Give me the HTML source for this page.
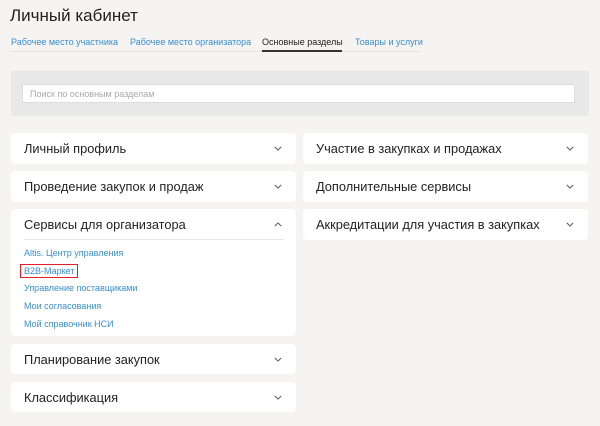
<!DOCTYPE html>
<html><head><meta charset="utf-8"><style>
*{box-sizing:border-box;margin:0;padding:0}
body{width:600px;height:426px;background:#f5f4f2;font-family:"Liberation Sans",sans-serif;position:relative;overflow:hidden;color:#222}
.a{position:absolute}
h1{position:absolute;left:10px;top:6px;font-size:17px;font-weight:normal;color:#222}
.tab{position:absolute;top:37px;font-size:9px;color:#3a8fd0}
.card{position:absolute;background:#fff;border-radius:4px}
.card .t{position:absolute;left:13px;top:0;line-height:31px;font-size:12.8px;color:#222}
.chev{position:absolute;right:14px;top:13px;width:8px;height:5px}
.lk{position:absolute;left:13px;font-size:9px;color:#3a8fd0}
</style></head><body>
<h1>Личный кабинет</h1>
<div class="tab" style="left:11px">Рабочее место участника</div>
<div class="tab" style="left:130px">Рабочее место организатора</div>
<div class="tab" style="left:262px;color:#222">Основные разделы</div>
<div class="tab" style="left:355px">Товары и услуги</div>
<div class="a" style="left:10px;top:51px;width:411px;height:1px;background:#e4e4e4"></div>
<div class="a" style="left:262px;top:50px;width:80px;height:2px;background:#333"></div>
<div class="a" style="left:11px;top:71px;width:578px;height:45px;background:#e8e8e8;border-radius:3px"></div>
<div class="a" style="left:22px;top:84px;width:553px;height:19px;background:#fff;border:1px solid #ddd;font-size:9px;color:#aaa;padding:4px 0 0 7px">Поиск по основным разделам</div>

<div class="card" style="left:11px;top:133px;width:285px;height:31px"><div class="t">Личный профиль</div><svg class="chev" viewBox="0 0 10 6"><path d="M1 1l4 4 4-4" fill="none" stroke="#555" stroke-width="1.2"/></svg></div>
<div class="card" style="left:11px;top:171px;width:285px;height:31px"><div class="t">Проведение закупок и продаж</div><svg class="chev" viewBox="0 0 10 6"><path d="M1 1l4 4 4-4" fill="none" stroke="#555" stroke-width="1.2"/></svg></div>
<div class="card" style="left:11px;top:209px;width:285px;height:127px"><div class="t">Сервисы для организатора</div><svg class="chev" viewBox="0 0 10 6"><path d="M1 5l4-4 4 4" fill="none" stroke="#555" stroke-width="1.2"/></svg>
<div class="a" style="left:13px;top:30px;width:260px;height:1px;background:#e6e6e6"></div>
<div class="lk" style="top:39px">Altis. Центр управления</div>
<div class="lk" style="top:55px;left:9px;border:1.5px solid #e0202a;padding:1px 3px">B2B-Маркет</div>
<div class="lk" style="top:74px">Управление поставщиками</div>
<div class="lk" style="top:92px">Мои согласования</div>
<div class="lk" style="top:110px">Мой справочник НСИ</div>
</div>
<div class="card" style="left:11px;top:344px;width:285px;height:30px"><div class="t">Планирование закупок</div><svg class="chev" viewBox="0 0 10 6"><path d="M1 1l4 4 4-4" fill="none" stroke="#555" stroke-width="1.2"/></svg></div>
<div class="card" style="left:11px;top:382px;width:285px;height:30px"><div class="t">Классификация</div><svg class="chev" viewBox="0 0 10 6"><path d="M1 1l4 4 4-4" fill="none" stroke="#555" stroke-width="1.2"/></svg></div>

<div class="card" style="left:303px;top:133px;width:285px;height:31px"><div class="t">Участие в закупках и продажах</div><svg class="chev" viewBox="0 0 10 6"><path d="M1 1l4 4 4-4" fill="none" stroke="#555" stroke-width="1.2"/></svg></div>
<div class="card" style="left:303px;top:171px;width:285px;height:31px"><div class="t">Дополнительные сервисы</div><svg class="chev" viewBox="0 0 10 6"><path d="M1 1l4 4 4-4" fill="none" stroke="#555" stroke-width="1.2"/></svg></div>
<div class="card" style="left:303px;top:209px;width:285px;height:31px"><div class="t">Аккредитации для участия в закупках</div><svg class="chev" viewBox="0 0 10 6"><path d="M1 1l4 4 4-4" fill="none" stroke="#555" stroke-width="1.2"/></svg></div>
</body></html>
